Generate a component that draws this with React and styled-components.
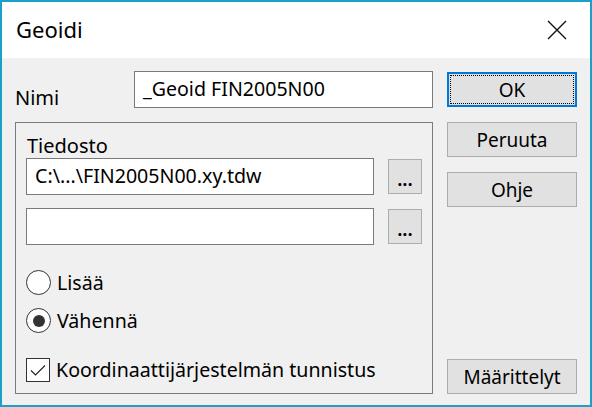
import React from 'react';
import styled, { createGlobalStyle } from 'styled-components';

const GlobalStyle = createGlobalStyle`
  html, body {
    margin: 0;
    padding: 0;
    background: #ffffff;
  }
  * {
    box-sizing: border-box;
  }
`;

function Radio({ checked, label }) {
  return (
    <OptionRow>
      <RadioCircle>{checked && <RadioDot />}</RadioCircle>
      <OptionText>{label}</OptionText>
    </OptionRow>
  );
}

function Check({ checked, label }) {
  return (
    <OptionRow>
      <CheckBox>
        {checked && (
          <svg width="22" height="22" viewBox="0 0 22 22">
            <path d="M4 11.5 L8.5 16 L18 6.5" fill="none" stroke="#222" strokeWidth="1.1" />
          </svg>
        )}
      </CheckBox>
      <OptionText>{label}</OptionText>
    </OptionRow>
  );
}

function App() {
  return (
    <Dialog>
      <GlobalStyle />
      <TitleBar>
        <Title>Geoidi</Title>
        <Close aria-label="close">
          <svg width="20" height="20" viewBox="0 0 20 20">
            <path d="M1 1 L19 19 M19 1 L1 19" stroke="#111" strokeWidth="1.4" />
          </svg>
        </Close>
      </TitleBar>

      <Body>
        <LeftColumn>
          <NameRow>
            <Label>Nimi</Label>
            <Field width="299px">_Geoid FIN2005N00</Field>
          </NameRow>

          <Group>
            <GroupLabel>Tiedosto</GroupLabel>
            <FileRow>
              <Field width="348px">C:\...\FIN2005N00.xy.tdw</Field>
              <Browse>...</Browse>
            </FileRow>
            <FileRow>
              <Field width="348px" />
              <Browse>...</Browse>
            </FileRow>

            <Options>
              <Radio label="Lisää" />
              <Radio checked label="Vähennä" />
            </Options>

            <Spacer />
            <Check checked label="Koordinaattijärjestelmän tunnistus" />
          </Group>
        </LeftColumn>

        <ButtonColumn>
          <Button primary>
            <Focus>OK</Focus>
          </Button>
          <Button>Peruuta</Button>
          <Button>Ohje</Button>
          <Button bottom>Määrittelyt</Button>
        </ButtonColumn>
      </Body>
    </Dialog>
  );
}

const font = `"Noto Sans", "Open Sans", sans-serif`;

const Dialog = styled.div`
  width: 592px;
  height: 407px;
  border: 2px solid #1ba1c7;
  display: flex;
  flex-direction: column;
  font-family: ${font};
  color: #000;
`;

const TitleBar = styled.div`
  height: 56px;
  background: #ffffff;
  display: flex;
  align-items: center;
  justify-content: space-between;
  padding: 0 23px 0 14px;
`;

const Title = styled.div`
  font-size: 22px;
  margin-top: -2px;
`;

const Close = styled.div`
  width: 20px;
  height: 20px;
  display: flex;
  margin-top: -1px;
`;

const Body = styled.div`
  flex: 1;
  background: #f0f0f0;
  display: flex;
  gap: 14px;
  padding: 13px 13px 11px 13px;
`;

const LeftColumn = styled.div`
  width: 418px;
  display: flex;
  flex-direction: column;
`;

const NameRow = styled.div`
  display: flex;
  align-items: center;
  justify-content: space-between;
  height: 37px;
`;

const Label = styled.div`
  font-size: 20px;
  margin-top: 16px;
`;

const Field = styled.div`
  width: ${p => p.width};
  height: 37px;
  background: #ffffff;
  border: 1px solid #7a7a7a;
  padding: 0 8px;
  font-size: 19.6px;
  line-height: 33px;
  white-space: nowrap;
  overflow: hidden;
`;

const Group = styled.div`
  flex: 1;
  margin-top: 14px;
  border: 1px solid #7a7a7a;
  padding: 11px 10px 11px 10px;
  display: flex;
  flex-direction: column;
`;

const GroupLabel = styled.div`
  font-size: 20px;
  line-height: 24px;
  padding-left: 1px;
`;

const FileRow = styled.div`
  display: flex;
  align-items: center;
  justify-content: space-between;
  margin-bottom: 13px;
`;

const Browse = styled.div`
  width: 34px;
  height: 35px;
  background: #e1e1e1;
  border: 1px solid #adadad;
  display: flex;
  align-items: center;
  justify-content: center;
  font-size: 19px;
  font-weight: 600;
  padding-top: 4px;
`;

const Options = styled.div`
  display: flex;
  flex-direction: column;
  gap: 13px;
  margin-top: 12px;
`;

const OptionRow = styled.div`
  display: flex;
  align-items: center;
  gap: 6px;
  height: 25px;
`;

const RadioCircle = styled.div`
  width: 25px;
  height: 25px;
  border-radius: 50%;
  border: 1.5px solid #333;
  background: #ffffff;
  display: flex;
  align-items: center;
  justify-content: center;
`;

const RadioDot = styled.div`
  width: 12px;
  height: 12px;
  border-radius: 50%;
  background: #333;
`;

const CheckBox = styled.div`
  width: 24px;
  height: 24px;
  border: 1.5px solid #333;
  background: #ffffff;
  display: flex;
  align-items: center;
  justify-content: center;
`;

const OptionText = styled.div`
  font-size: 19.6px;
  line-height: 24px;
`;

const Spacer = styled.div`
  flex: 1;
`;

const ButtonColumn = styled.div`
  width: 130px;
  display: flex;
  flex-direction: column;
  gap: 15px;
  padding-top: 1px;
`;

const Button = styled.div`
  height: 35px;
  background: #e1e1e1;
  border: ${p => (p.primary ? '2px solid #0078d7' : '1px solid #adadad')};
  padding: ${p => (p.primary ? '1px' : '0')};
  display: flex;
  align-items: center;
  justify-content: center;
  font-size: 19px;
  margin-top: ${p => (p.bottom ? 'auto' : '0')};
`;

const Focus = styled.div`
  flex: 1;
  align-self: stretch;
  border: 1px dotted #000;
  display: flex;
  align-items: center;
  justify-content: center;
`;

export default App;
